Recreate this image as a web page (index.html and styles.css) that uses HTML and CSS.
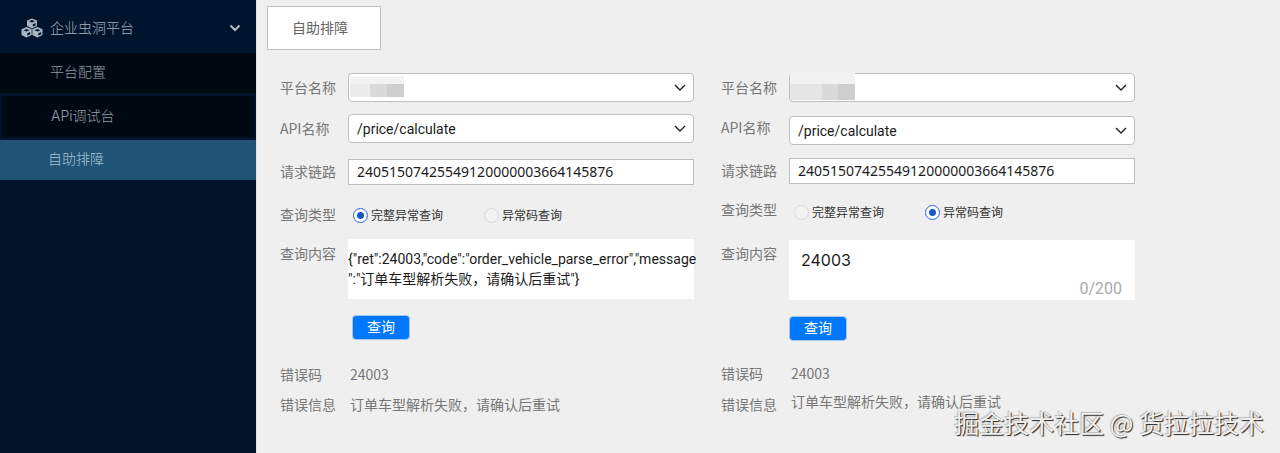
FILE: index.html
```html
<!DOCTYPE html>
<html lang="zh-CN">
<head>
<meta charset="utf-8">
<title>自助排障</title>
<link rel="stylesheet" href="styles.css">
</head>
<body>
<div class="app">
  <nav class="sidebar">
    <button type="button" class="group">
      <svg class="cubes" viewBox="0 0 22 20" aria-hidden="true">
        <path class="cube" d="M11 0.5 16 2.5V8L11 10.5 6 8V2.5Z M5.5 9 10.7 11.3V17L5.5 19.5 0.5 17V11.3Z M16.5 9 21.5 11.3V17L16.5 19.5 11.3 17V11.3Z"/>
        <path class="face" d="M11 2 14 3.3 11 4.6 8 3.3Z M5.5 11 8.5 12.3 5.5 13.6 2.5 12.3Z M16.5 11 19.5 12.3 16.5 13.6 13.5 12.3Z M11.8 6.2 14.7 5V7.3L11.8 8.7Z M6.3 15.2 9.2 14V16.3L6.3 17.7Z M17.3 15.2 20.2 14V16.3L17.3 17.7Z"/>
      </svg>
      <span class="group-name">企业虫洞平台</span>
      <svg class="chevron" viewBox="0 0 12 8" aria-hidden="true"><path d="M1.5 1.5 6 6 10.5 1.5"/></svg>
    </button>
    <a class="item" href="#config">平台配置</a>
    <a class="item item-framed" href="#debug">APi调试台</a>
    <a class="item item-active" href="#self" aria-current="page">自助排障</a>
  </nav>
  <main class="main">
    <button type="button" class="tab">自助排障</button>
    <div class="forms">
      <form class="form form-full">
        <div class="row"><label class="label" for="p1">平台名称</label><div class="select-box"><select class="field select" id="p1"><option></option></select><span class="mask"></span></div></div>
        <div class="row row-api"><label class="label" for="a1">API名称</label><select class="field select" id="a1"><option>/price/calculate</option></select></div>
        <div class="row row-trace"><label class="label" for="t1">请求链路</label><input class="field input" id="t1" type="text" value="24051507425549120000003664145876"></div>
        <div class="row row-type" role="radiogroup" aria-labelledby="k1"><span class="label" id="k1">查询类型</span>
          <div class="options"><label class="option"><input type="radio" name="k1" checked>完整异常查询</label><label class="option"><input type="radio" name="k1">异常码查询</label></div></div>
        <div class="row row-content"><label class="label" for="c1">查询内容</label><div class="area-box"><textarea class="area" id="c1">{"ret":24003,"code":"order_vehicle_parse_error","message
":"订单车型解析失败，请确认后重试"}</textarea></div></div>
        <button type="button" class="submit">查询</button>
        <dl class="result"><div class="row"><dt class="label">错误码</dt><dd class="value">24003</dd></div>
        <div class="row row-message"><dt class="label">错误信息</dt><dd class="value">订单车型解析失败，请确认后重试</dd></div></dl>
      </form>
      <form class="form form-code">
        <div class="row"><label class="label" for="p2">平台名称</label><div class="select-box"><select class="field select" id="p2"><option></option></select><span class="mask"></span></div></div>
        <div class="row row-api"><label class="label" for="a2">API名称</label><select class="field select" id="a2"><option>/price/calculate</option></select></div>
        <div class="row row-trace"><label class="label" for="t2">请求链路</label><input class="field input" id="t2" type="text" value="24051507425549120000003664145876"></div>
        <div class="row row-type" role="radiogroup" aria-labelledby="k2"><span class="label" id="k2">查询类型</span>
          <div class="options"><label class="option"><input type="radio" name="k2">完整异常查询</label><label class="option"><input type="radio" name="k2" checked>异常码查询</label></div></div>
        <div class="row row-content"><label class="label" for="c2">查询内容</label><div class="area-box"><textarea class="area" id="c2">24003</textarea><span class="counter">0/200</span></div></div>
        <button type="button" class="submit">查询</button>
        <dl class="result"><div class="row"><dt class="label">错误码</dt><dd class="value">24003</dd></div>
        <div class="row row-message"><dt class="label">错误信息</dt><dd class="value">订单车型解析失败，请确认后重试</dd></div></dl>
      </form>
    </div>
  </main>
  <div class="watermark">掘金技术社区 @ 货拉拉技术</div>
</div>
</body>
</html>
```
FILE: styles.css
```css
* { box-sizing: border-box; }
body { margin: 0; font: 14px/22px Roboto, "Noto Sans CJK SC", sans-serif; background: #efefef; color: #777; }
button, input, select, textarea { font: inherit; margin: 0; }
.app { position: relative; display: flex; min-height: 100vh; }

.sidebar { flex: 0 0 257px; background: #001329; border-right: 1px solid #dce4ec; font-weight: 300; }
.group { display: flex; align-items: center; width: 100%; height: 53px; padding: 2px 15px 0 21px; border: 0; background: #00142d; color: #a4afbd; text-align: left; }
.cubes { width: 22px; height: 20px; margin-right: 7px; }
.cube { fill: #a9b4c5; }
.face { fill: #00142d; }
.group-name { flex: 1; }
.chevron { width: 12px; height: 8px; fill: none; stroke: #b5bfcc; stroke-width: 2; }
.item { display: flex; align-items: center; height: 40px; padding: 0 0 2px 50px; background: #000912; color: #929da8; text-decoration: none; }
.item-framed { height: 47px; border: 2px solid #001329; border-top-width: 3px; border-bottom-width: 3px; padding-left: 49px; font-family: Inter, "Noto Sans CJK SC", sans-serif; }
.item-active { background: #205375; color: #a9c5d8; padding-left: 48px; }

.main { flex: 1; min-width: 0; padding: 6px 145px 20px 23px; }
.tab { display: block; width: 114px; height: 44px; margin: 0 0 23px -13px; padding: 0 8px 0 0; border: 1px solid #bfbfbf; background: #fff; color: #666; }
.forms { display: grid; grid-template-columns: 1fr 1fr; gap: 27px; }
.row { display: flex; align-items: center; }
.label { flex: 0 0 68px; padding-bottom: 2px; white-space: nowrap; font-family: "Noto Sans CJK SC", sans-serif; }
.field { flex: 1; min-width: 0; border: 1px solid #bfbfbf; background-color: #fff; color: #1b1b1b; }
.select { height: 29px; padding: 0 8px; border-radius: 4px; appearance: none; background-repeat: no-repeat; background-position: right 7px center; background-image: url("data:image/svg+xml,%3Csvg xmlns='http://www.w3.org/2000/svg' width='12' height='8'%3E%3Cpath d='M1 1 6 6 11 1' fill='none' stroke='%23222' stroke-width='1.4'/%3E%3C/svg%3E"); }
.select-box { position: relative; display: flex; flex: 1; min-width: 0; }
.mask { position: absolute; left: 2px; top: 3px; width: 54px; height: 21px; background: linear-gradient(#f3f3f3, #f3f3f3) top / 100% 8px no-repeat, linear-gradient(90deg, #ececec 20px, #dadada 20px 37px, #cfcfcf 37px); }
.input { height: 26px; padding: 0 8px 2px; font-family: "Noto Sans", sans-serif; }
.row-api { margin-top: 12px; }
.row-trace { margin-top: 16px; }
.row-type { margin-top: 18px; }
.row-content { margin-top: 12px; align-items: flex-start; }
.row-content .label { padding-top: 3px; }
.options { display: flex; }
.option { display: flex; align-items: center; gap: 3px; width: 131px; color: #333; font: 12px/22px "Noto Sans CJK SC", sans-serif; }
.option input { appearance: none; width: 15px; height: 15px; margin-left: 5px; border: 1px solid #d8d8d8; border-radius: 50%; background: #f2f2f2; }
.option input:checked { border-color: #2468da; background: radial-gradient(circle, #1456d0 3px, #fff 4px); }
.area-box { position: relative; flex: 1; min-width: 0; display: flex; background: #fff; }
.area { flex: 1; min-width: 0; height: 60px; padding: 10px 0; border: 0; resize: none; overflow: hidden; background: transparent; color: #1b1b1b; line-height: 20px; }
.form-full .area { margin-right: -8px; white-space: pre; }
.counter { position: absolute; right: 13px; bottom: 0; font-size: 16px; color: #aaa; }
.submit { display: block; width: 58px; height: 25px; margin: 16px 0 0 72px; padding: 0 0 2px; border: 1px solid #a5c8ee; border-radius: 4px; background: #0077ff; color: #fff; line-height: 20px; }
.result { margin: 23px 0 0; }
.result .label { padding-bottom: 0; }
.value { margin: 0; padding-left: 2px; font-family: "Noto Sans CJK SC", sans-serif; }
.row-message { margin-top: 8px; }

.form-code .mask { left: 1px; top: -1px; width: 65px; height: 28px; background: linear-gradient(#f2f2f2, #f2f2f2) top / 100% 12px no-repeat, linear-gradient(90deg, #e6e6e6 32px, #dadada 32px 48px, #cecece 48px); }
.form-code .row-api { margin-top: 14px; align-items: flex-start; }
.form-code .row-trace { margin-top: 13px; }
.form-code .row-type { margin-top: 14px; align-items: flex-start; }
.form-code .options .option { line-height: 28px; }
.form-code .row-content { margin-top: 14px; }
.form-code .row-content .label { padding-top: 2px; }
.form-code .area { padding: 9px 12px; font: 16px/22px Inter, sans-serif; }
.form-code .submit { margin-left: 68px; }
.form-code .result { margin-top: 21px; }
.form-code .row-message { margin-top: 6px; align-items: flex-start; }
.form-code .row-message .label { line-height: 28px; }

.watermark { position: absolute; right: 16px; bottom: 13px; font: 25px/36px "Noto Sans CJK SC", sans-serif; color: #f0f0f0; text-shadow: 1px 1px 1px #222, -1px -1px 1px #bbb; }
```
